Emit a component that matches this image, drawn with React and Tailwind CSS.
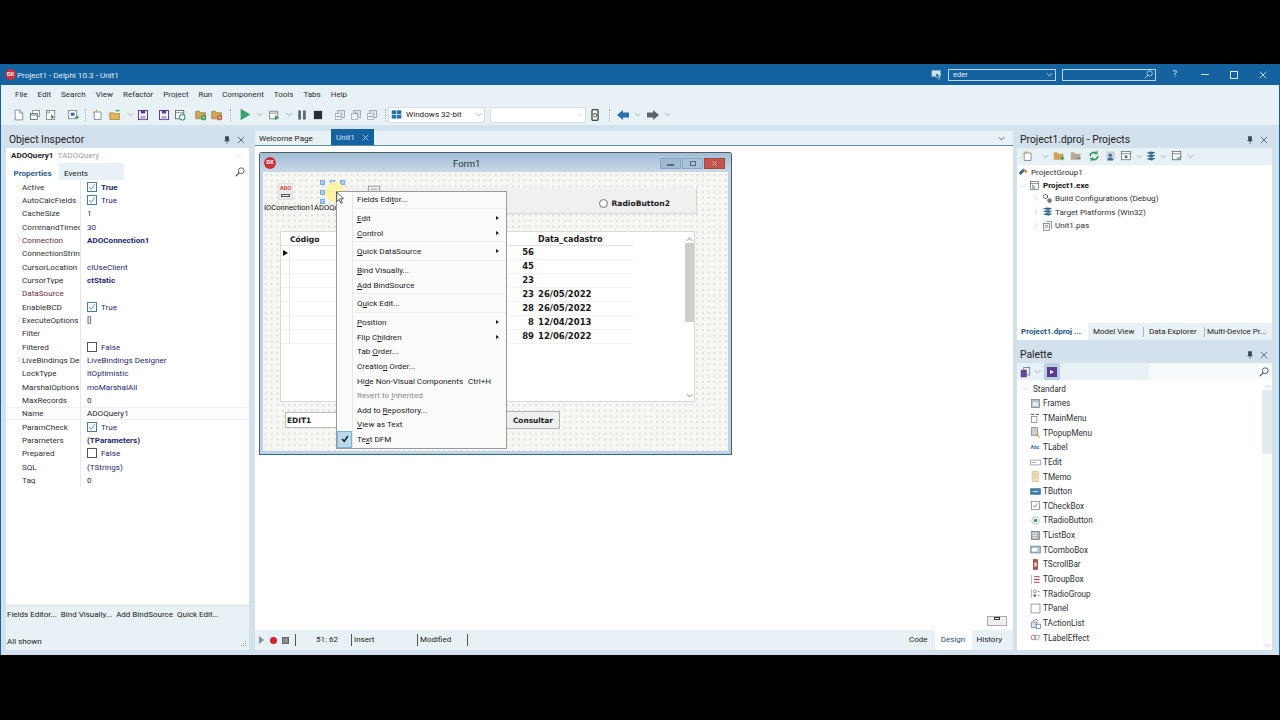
import React from "react";

const Svg = ({ children, s = 12, c = "" }) => (
  <svg viewBox="0 0 16 16" width={s} height={s} className={"block shrink-0 " + c} fill="none">{children}</svg>
);
const Chev = ({ c = "", color = "#8a969e" }) => (
  <svg viewBox="0 0 10 6" width="7" height="5" className={"block shrink-0 " + c} fill="none"><path d="M1 1l4 4 4-4" stroke={color} strokeWidth="1" /></svg>
);
const ChevR = ({ c = "", color = "#b4bcc2" }) => (
  <svg viewBox="0 0 6 10" width="4" height="7" className={"block shrink-0 " + c} fill="none"><path d="M1 1l4 4-4 4" stroke={color} strokeWidth="1" /></svg>
);
const Close = ({ color = "#44505a", s = 8 }) => (
  <svg viewBox="0 0 10 10" width={s} height={s} className="block shrink-0" fill="none"><path d="M1 1l8 8M9 1l-8 8" stroke={color} strokeWidth="1" /></svg>
);
const Pin = () => (
  <svg viewBox="0 0 8 10" width="6" height="8" className="block shrink-0"><path d="M1.5 0h5v5.5h1v1H4.5V10h-1V6.5H.5v-1h1z" fill="#3b4650" /></svg>
);
const Mag = ({ color = "#3b4650", s = 10 }) => (
  <svg viewBox="0 0 12 12" width={s} height={s} className="block shrink-0" fill="none"><circle cx="7.5" cy="4.5" r="3.5" stroke={color} /><path d="M5 7l-4 4" stroke={color} strokeWidth="1.3" /></svg>
);

/* toolbar icons */
const Doc = () => <Svg><path d="M3 1.5h6l4 4v9H3z" fill="#fff" stroke="#6d7a84" /><path d="M9 1.5v4h4" stroke="#6d7a84" /></Svg>;
const Win2 = () => <Svg><rect x="5" y="2" width="9" height="8" fill="#fff" stroke="#6d7a84" /><rect x="2" y="6" width="9" height="8" fill="#fff" stroke="#4c5963" /><path d="M2 8h9" stroke="#4c5963" /></Svg>;
const DocGear = () => <Svg><rect x="2" y="2" width="11" height="12" fill="#fff" stroke="#6d7a84" /><path d="M2 5h4V2" stroke="#6d7a84" /><path d="M8 7l4 4-2 1-1 2z" fill="#3b4650" /></Svg>;
const FormGo = () => <Svg><rect x="2" y="2" width="11" height="11" fill="#fff" stroke="#6d7a84" /><rect x="5" y="5" width="5" height="4" fill="#4b5a9a" /><path d="M10 11h5M13 9l2 2-2 2" stroke="#2e9a4e" strokeWidth="1.4" /></Svg>;
const NewStar = () => <Svg><path d="M3 4h9v10H3z" fill="#fff" stroke="#6d7a84" /><path d="M3 2l2 2M6 1v3M1 5h3" stroke="#d39a2a" strokeWidth="1.2" /></Svg>;
const FolderOpen = () => <Svg><path d="M1 5h5l1 1h7v8H1z" fill="#e0b25a" stroke="#a8853e" /><path d="M9 3a3 3 0 0 1 5 0" stroke="#2e9a4e" strokeWidth="1.6" /></Svg>;
const Save = () => <Svg><rect x="2" y="2" width="12" height="12" fill="#fff" stroke="#5d3f8f" strokeWidth="1.4" /><rect x="5" y="2" width="6" height="4" fill="#5d3f8f" /><rect x="4.5" y="9" width="7" height="5" fill="#b9a9d6" /></Svg>;
const SaveAll = () => <Svg><rect x="2" y="2" width="11" height="11" fill="#fff" stroke="#5c6a75" strokeWidth="1.2" /><path d="M2 5h11" stroke="#5c6a75" /><circle cx="11" cy="11" r="3.6" fill="#fff" stroke="#2e9a7e" strokeWidth="1.4" /></Svg>;
const FolderBadge = ({ color }) => <Svg><path d="M1 3h5l1 2h7v8H1z" fill="#cfa55a" stroke="#9c8040" /><circle cx="11.5" cy="11.5" r="3.5" fill={color} /><path d="M10 11.5h3M11.5 10v3" stroke="#fff" /></Svg>;
const Run = () => <Svg s={13}><path d="M2 1l12 7-12 7z" fill="#38a169" /></Svg>;
const RunWin = () => <Svg><path d="M2 3h11v10H2z" fill="#fff" stroke="#5c6a75" /><path d="M2 5.5h11" stroke="#5c6a75" /><path d="M9 8l6 3.5-6 3.5z" fill="#38a169" /></Svg>;
const Pause = () => <Svg><rect x="3" y="2" width="3.6" height="12" fill="#5b6670" /><rect x="9.4" y="2" width="3.6" height="12" fill="#5b6670" /></Svg>;
const Stop = () => <Svg><rect x="2.5" y="2.5" width="11" height="11" fill="#2a2e32" /></Svg>;
const Trace = ({ flip }) => <Svg><rect x="5" y="2" width="9" height="9" fill="#dbe4ea" stroke="#8c99a3" /><rect x="2" y="6" width="8" height="8" fill="#eef3f6" stroke="#9aa6af" />{flip ? <path d="M7 4l4 4" stroke="#3f8fb5" /> : <path d="M3 10h6" stroke="#3f8fb5" />}</Svg>;
const Grip = ({ c = "" }) => <div className={"w-px h-[12px] border-l border-dotted border-[#aab6be] shrink-0 " + c} />;

const Cell = ({ c = "", children }) => <div className={"w-4 h-4 flex items-center justify-center shrink-0 " + c}>{children}</div>;
const ChevCell = ({ c = "" }) => <div className={"w-[10px] h-4 flex items-center justify-center shrink-0 " + c}><Chev /></div>;

const WinLogo = () => <Svg s={11}><rect x="1" y="2" width="6.5" height="5.5" fill="#1f6fb5" /><rect x="8.5" y="2" width="6.5" height="5.5" fill="#1f6fb5" /><rect x="1" y="8.5" width="6.5" height="5.5" fill="#1f6fb5" /><rect x="8.5" y="8.5" width="6.5" height="5.5" fill="#1f6fb5" /></Svg>;

const Dx = ({ s = 11 }) => (
  <div className={"rounded-full bg-[#c8323c] text-white flex items-center justify-center font-bold leading-none shrink-0 text-[5.5px] " + (s === 11 ? "w-[11px] h-[11px]" : "w-[12px] h-[12px]")}>DX</div>
);

const menus = ["File", "Edit", "Search", "View", "Refactor", "Project", "Run", "Component", "Tools", "Tabs", "Help"];

/* inspector */
const Check = ({ on }) => (
  <div className={"w-[10px] h-[10px] border bg-white shrink-0 flex items-center justify-center " + (on ? "border-[#4a7a9e]" : "border-[#555]")}>
    {on && <svg viewBox="0 0 10 10" width="8" height="8" fill="none"><path d="M1.5 5l2.5 3L8.5 1.5" stroke="#3b7fae" strokeWidth="1" /></svg>}
  </div>
);
const rows = [
  { n: "Active", chk: true, v: "True", b: true },
  { n: "AutoCalcFields", chk: true, v: "True" },
  { n: "CacheSize", v: "1" },
  { n: "CommandTimeout", v: "30" },
  { n: "Connection", v: "ADOConnection1", b: true, arrow: true, red: true },
  { n: "ConnectionString", v: "" },
  { n: "CursorLocation", v: "clUseClient" },
  { n: "CursorType", v: "ctStatic", b: true },
  { n: "DataSource", v: "", red: true },
  { n: "EnableBCD", chk: true, v: "True" },
  { n: "ExecuteOptions", v: "[]", arrow: true },
  { n: "Filter", v: "" },
  { n: "Filtered", chk: false, v: "False" },
  { n: "LiveBindings Designer", v: "LiveBindings Designer", arrow: true },
  { n: "LockType", v: "ltOptimistic" },
  { n: "MarshalOptions", v: "moMarshalAll" },
  { n: "MaxRecords", v: "0" },
  { n: "Name", v: "ADOQuery1", sel: true },
  { n: "ParamCheck", chk: true, v: "True" },
  { n: "Parameters", v: "(TParameters)", b: true },
  { n: "Prepared", chk: false, v: "False" },
  { n: "SQL", v: "(TStrings)" },
  { n: "Tag", v: "0" },
];

const Row = ({ r }) => (
  <div className={"flex h-[13.33px] items-center " + (r.sel ? "bg-[#fcfdfd] shadow-[inset_0_1px_0_#eef0f2,inset_0_-1px_0_#eef0f2]" : "")}>
    <div className="w-[16px] pl-[11px] shrink-0">{r.arrow && <ChevR />}</div>
    <div className={"w-[58px] overflow-hidden whitespace-nowrap shrink-0 " + (r.red ? "text-[#6b2b3c]" : "text-[#2b2f33]")}>{r.n}</div>
    <div className="w-px h-full bg-[#e4e8ea] shrink-0" />
    <div className={"pl-[6px] flex items-center gap-[4px] whitespace-nowrap " + (r.sel ? "text-[#222] " : "text-[#23296b] ") + (r.b ? "font-bold" : "")}>
      {r.chk !== undefined && <Check on={r.chk} />}
      <span>{r.v}</span>
    </div>
  </div>
);

/* context menu */
const Arrow = () => <div className="w-0 h-0 border-y-[2.5px] border-y-transparent border-l-[3px] border-l-[#222] mr-[7px]" />;
const Item = ({ children, sub, gray, checked, shortcut }) => (
  <div className={"flex items-center h-[14.67px] " + (gray ? "text-[#8a8a8a]" : "text-[#222]")}>
    <div className="w-[15px] h-full shrink-0 flex items-center justify-center relative">
      {checked && (
        <div className="absolute inset-x-[0px] inset-y-[-1px] bg-[#b7d9ea] border border-[#7fb3cf] flex items-center justify-center">
          <svg viewBox="0 0 10 10" width="8" height="8" fill="none"><path d="M1.5 5l2.5 3L8.5 1.5" stroke="#111" strokeWidth="1.8" /></svg>
        </div>
      )}
    </div>
    <div className="w-px h-full bg-[#e6e6e6] shrink-0" />
    <div className="pl-[4px] flex-1 whitespace-nowrap">{children}</div>
    {shortcut && <div className="pr-[15px] whitespace-nowrap">{shortcut}</div>}
    {sub && <Arrow />}
  </div>
);
const Sep = () => (
  <div className="flex h-[4px] items-center">
    <div className="w-[15px] h-full shrink-0" />
    <div className="w-px h-full bg-[#e6e6e6] shrink-0" />
    <div className="flex-1 h-px bg-[#ececec]" />
  </div>
);

const gridRows = [["56", ""], ["45", ""], ["23", ""], ["23", "26/05/2022"], ["28", "26/05/2022"], ["8", "12/04/2013"], ["89", "12/06/2022"]];

/* palette icons */
const pal = {
  TFrames: <Svg s={11}><rect x="2" y="2" width="12" height="12" fill="#b9c2c9" stroke="#6d7a84" /><rect x="4" y="6" width="8" height="6" fill="#e6ebee" /></Svg>,
  TMainMenu: <Svg s={11}><rect x="2" y="5" width="8" height="9" fill="#fff" stroke="#6d7a84" /><path d="M1 2h14" stroke="#6d7a84" strokeWidth="2" strokeDasharray="5 2" /></Svg>,
  TPopupMenu: <Svg s={11}><rect x="2" y="1" width="9" height="11" fill="#c9d0d6" stroke="#6d7a84" /><path d="M9 10l5 5" stroke="#d39a2a" strokeWidth="1.6" /></Svg>,
  TLabel: <span className="text-[5px] text-[#3c6d98] font-bold leading-none">Abc</span>,
  TEdit: <Svg s={11}><rect x="1" y="4.5" width="14" height="7" fill="#fff" stroke="#7a868f" /><path d="M3 8h5" stroke="#7a868f" /></Svg>,
  TMemo: <Svg s={11}><rect x="3" y="1" width="9" height="14" fill="#f3e4c2" stroke="#c7b07a" /><path d="M5 4h5M5 7h5M5 10h5" stroke="#c7b07a" /></Svg>,
  TButton: <Svg s={11}><rect x="1" y="4" width="14" height="8" fill="#3f7fb0" stroke="#2b5f88" /><path d="M4 8h8" stroke="#fff" /></Svg>,
  TCheckBox: <Svg s={11}><rect x="2" y="2" width="12" height="12" fill="#fff" stroke="#6d7a84" /><path d="M5 8l2 2.5L11 5" stroke="#3c6d98" /></Svg>,
  TRadioButton: <Svg s={11}><circle cx="8" cy="8" r="5.5" fill="#fff" stroke="#9aa6af" /><circle cx="8" cy="8" r="2.6" fill="#3c8f7a" /></Svg>,
  TListBox: <Svg s={11}><rect x="2" y="2" width="12" height="12" fill="#aeb8c0" stroke="#6d7a84" /><path d="M4 5h6M4 8h6M4 11h6" stroke="#fff" /></Svg>,
  TComboBox: <Svg s={11}><rect x="1" y="3" width="14" height="10" fill="#a9c0d2" stroke="#6d7a84" /><rect x="3" y="6" width="8" height="5" fill="#fff" /></Svg>,
  TScrollBar: <Svg s={11}><rect x="5" y="1" width="6" height="14" fill="#b5544f" stroke="#7d3b38" /><rect x="6" y="5" width="4" height="6" fill="#e7c9c7" /></Svg>,
  TGroupBox: <Svg s={11}><path d="M3 2H2v12h1" stroke="#8a969e" /><path d="M6 4h8M6 8h8M6 12h8" stroke="#a33d4e" strokeWidth="1.5" /></Svg>,
  TRadioGroup: <Svg s={11}><path d="M3 2H2v12h1" stroke="#8a969e" /><circle cx="7" cy="5" r="2" stroke="#666" /><circle cx="7" cy="11" r="2" fill="#666" /><path d="M11 5h3M11 11h3" stroke="#666" /></Svg>,
  TPanel: <Svg s={11}><rect x="1.5" y="1.5" width="13" height="13" fill="#fff" stroke="#6d7a84" /></Svg>,
  TActionList: <Svg s={11}><path d="M2 6h8v8H2z" fill="#dfe5ea" stroke="#5c6a75" /><path d="M4 4l6-2 2 3" stroke="#5c6a75" /><rect x="9" y="9" width="6" height="6" fill="#fff" stroke="#3c6d98" /></Svg>,
  TLabelEffect: <Svg s={11}><circle cx="5" cy="8" r="3.5" stroke="#a33d4e" /><circle cx="10" cy="8" r="3.5" stroke="#7a868f" /><path d="M13 4l2 2" stroke="#2e9a4e" /></Svg>,
};
const palItems = [
  ["Frames", "TFrames"], ["TMainMenu", "TMainMenu"], ["TPopupMenu", "TPopupMenu"], ["TLabel", "TLabel"], ["TEdit", "TEdit"],
  ["TMemo", "TMemo"], ["TButton", "TButton"], ["TCheckBox", "TCheckBox"], ["TRadioButton", "TRadioButton"], ["TListBox", "TListBox"],
  ["TComboBox", "TComboBox"], ["TScrollBar", "TScrollBar"], ["TGroupBox", "TGroupBox"], ["TRadioGroup", "TRadioGroup"], ["TPanel", "TPanel"],
  ["TActionList", "TActionList"], ["TLabelEffect", "TLabelEffect"],
];

const PanelHead = ({ title }) => (
  <div className="h-[17px] flex items-center justify-between pl-[3px] pr-[4px] pt-px shrink-0">
    <span className="text-[10.3px] text-[#222] leading-none">{title}</span>
    <div className="flex items-center gap-[7px]"><Pin /><Close /></div>
  </div>
);

export default function App() {
  return (
    <div className="w-[1280px] h-[720px] bg-black pt-[64px] overflow-hidden font-['Roboto',sans-serif] text-[8.1px] text-[#222] leading-none">
      <div className="h-[591px] flex flex-col bg-[#d2e1eb] border-x border-[#14629f]">
        {/* title bar */}
        <div className="h-[21px] bg-[#14629f] flex items-center pl-[4px] shrink-0">
          <Dx />
          <span className="ml-px pt-px text-[#e3eef6]">Project1 - Delphi 10.3 - Unit1</span>
          <div className="ml-auto flex items-center">
            <Svg s={11}><rect x="1" y="2" width="13" height="9" fill="#cfe0ec" /><path d="M7 6l6 3-2 1 2 4-2 1-2-4-2 1z" fill="#14629f" stroke="#fff" strokeWidth=".7" /></Svg>
            <div className="ml-[6px] w-[108px] h-[12px] border border-[#bcd6ea] flex items-center justify-between pl-[4px] pr-[2px] text-[#e3eef6] text-[7.6px]">
              <span>eder</span><Chev color="#ffffff" />
            </div>
            <div className="ml-[6px] w-[94px] h-[12px] border border-[#bcd6ea] flex items-center justify-end pr-[2px]"><Mag color="#d8e8f3" s={9} /></div>
            <span className="w-[14px] ml-[12px] text-center text-[#dbe9f3] text-[9px]">?</span>
            <div className="ml-[19px] w-[8px] h-px bg-[#cfe2ef]" />
            <div className="ml-[21px] w-[8px] h-[8px] border border-[#dbe9f3]" />
            <div className="ml-[21px] mr-[12px]"><Close color="#eef5fa" /></div>
          </div>
        </div>
        {/* menu */}
        <div className="h-[19px] bg-[#e8f1f5] flex items-center pl-[14px] gap-[10px] shrink-0 text-[#2a2f33]">
          {menus.map((m) => <span key={m} className="text-[8px]">{m}</span>)}
        </div>
        {/* toolbar */}
        <div className="h-[21px] bg-[#e8f1f5] flex items-center pl-[10px] shrink-0">
          <Cell><Doc /></Cell><Cell><Win2 /></Cell><Cell><DocGear /></Cell>
          <Cell c="ml-[6px]"><FormGo /></Cell>
          <Grip c="ml-[4px]" />
          <Cell c="ml-[4px]"><NewStar /></Cell>
          <Cell c="ml-px"><FolderOpen /></Cell>
          <ChevCell c="ml-[2px]" />
          <Cell><Save /></Cell>
          <Cell c="ml-[5px]"><Save /></Cell>
          <Cell><SaveAll /></Cell>
          <Cell c="ml-[5px]"><FolderBadge color="#3c9a57" /></Cell>
          <Cell><FolderBadge color="#c9574a" /></Cell>
          <Grip c="ml-[5px]" />
          <Cell c="ml-[6px]"><Run /></Cell>
          <ChevCell c="ml-px" />
          <Cell c="ml-[2px]"><RunWin /></Cell>
          <ChevCell c="ml-[2px]" />
          <Cell><Pause /></Cell>
          <Cell><Stop /></Cell>
          <Cell c="ml-[6px]"><Trace /></Cell>
          <Cell><Trace flip /></Cell>
          <Cell><Trace /></Cell>
          <Grip c="ml-[5px]" />
          <div className="ml-[2px] w-[97px] h-[16px] bg-white border border-[#d5dfe5] flex items-center pl-[2px] pr-[2px] gap-[4px]">
            <WinLogo /><span className="flex-1">Windows 32-bit</span><Chev />
          </div>
          <div className="ml-[5px] w-[96px] h-[16px] bg-white border border-[#d5dfe5] flex items-center justify-end pr-[2px]"><Chev color="#c2cad0" /></div>
          <Svg s={12} c="ml-[3px]"><rect x="4" y="1" width="8" height="14" rx="1" fill="#fff" stroke="#111" strokeWidth="1.4" /><path d="M6 8a2 2 0 0 1 4 0M10 8a2 2 0 0 1-4 1" stroke="#111" /></Svg>
          <Grip c="ml-[8px]" />
          <svg viewBox="0 0 12 10" width="12" height="10" className="ml-[7px] block"><path d="M0 5l6-5v2.5h6v5H6V10z" fill="#2a72ad" /></svg>
          <Chev c="ml-[5px]" />
          <svg viewBox="0 0 12 10" width="12" height="10" className="ml-[6px] block"><path d="M12 5L6 0v2.5H0v5h6V10z" fill="#5e6468" /></svg>
          <Chev c="ml-[5px]" />
        </div>

        {/* main */}
        <div className="flex-1 flex min-h-0 pt-[6px]">
          {/* Left panel */}
          <div className="w-[254px] pl-[5px] pr-[6px] flex flex-col shrink-0">
            <PanelHead title="Object Inspector" />
            <div className="h-[15px] bg-white flex items-center pl-[5px] pr-[7px] shrink-0">
              <span className="font-bold">ADOQuery1</span>
              <span className="ml-[4px] text-[#9aa3a9]">TADOQuery</span>
              <Chev c="ml-auto" color="#c8d0d5" />
            </div>
            <div className="h-[17px] flex items-center shrink-0 bg-white">
              <div className="w-[53px] h-full bg-white flex items-center justify-center pt-[3px] font-bold text-[#2a5f8f]">Properties</div>
              <div className="w-[65px] h-full bg-[#e8f1f5] flex items-center pl-[5px] pt-[3px]">Events</div>
              <div className="flex-1 flex justify-end pr-[4px] pt-[1px]"><Mag /></div>
            </div>
            <div className="h-[425px] bg-white shrink-0 overflow-hidden">
              {rows.map((r) => <Row key={r.n} r={r} />)}
            </div>
            <div className="flex-1 bg-[#e8f1f5] mt-px flex flex-col relative">
              <div className="h-[17px] flex items-center pl-px gap-[4px] shrink-0 whitespace-nowrap text-[8px]">
                <span>Fields Editor...</span><span>Bind Visually...</span><span>Add BindSource</span><span>Quick Edit...</span>
              </div>
              <div className="mt-auto mb-[4px] pl-[1px] text-[8px]">All shown</div>
              <svg viewBox="0 0 6 6" width="6" height="6" className="absolute right-[3px] bottom-[3px] block"><path d="M5 0h1v1H5zM3 2h1v1H3zM5 2h1v1H5zM1 4h1v1H1zM3 4h1v1H3zM5 4h1v1H5z" fill="#9aa6af" /></svg>
            </div>
            <div className="h-[5px] shrink-0" />
          </div>

          {/* Center */}
          <div className="w-[758px] flex flex-col shrink-0">
            <div className="h-[15px] bg-[#e8f1f5] border-b border-[#5f8f9f] flex items-end shrink-0 relative">
              <div className="w-[72px] h-full flex items-center pl-[4px] pt-px">Welcome Page</div>
              <div className="ml-[4px] w-[43px] h-[16px] bg-[#14629f] flex items-center pl-[5px] gap-[7px] text-[#d6e6f2]">Unit1<Close color="#d6e6f2" s={7} /></div>
              <Chev c="ml-auto mr-[8px] self-center" color="#333" />
            </div>
            <div className="flex-1 bg-white relative min-h-0 pt-[6px] pl-[4px]">
              {/* Form */}
              <div className="w-[473px] h-[303px] relative bg-[#bcd3e6] border border-[#4d5d69] border-b-[#2f6c80] rounded-t-[3px] flex flex-col">
                <div className="h-[19px] bg-gradient-to-b from-[#a3bdd4] to-[#c7d9e8] flex items-center pl-[4px] pt-px relative shrink-0">
                  <Dx s={12} />
                  <span className="absolute left-[193px] top-[6px] text-[9.5px] text-[#28343e]">Form1</span>
                  <div className="ml-auto mr-[6px] flex gap-[1px] items-center">
                    <div className="w-[21px] h-[11px] bg-[#9fbad2] border border-[#8aa4bb] flex items-end justify-center pb-[2px]"><div className="w-[7px] h-[2px] bg-white border border-[#55697a]" /></div>
                    <div className="w-[21px] h-[11px] bg-[#a9c3d9] border border-[#8aa4bb] flex items-center justify-center"><div className="w-[6px] h-[5px] border border-[#55697a]" /></div>
                    <div className="w-[21px] h-[11px] bg-[#c2554e] border border-[#a04a44] flex items-center justify-center"><Close color="#fff" s={5} /></div>
                  </div>
                </div>
                <div className="flex-1 mx-[3px] mb-[3px] bg-[#f6f6f3] bg-[radial-gradient(circle,#a0a0a0_0.5px,transparent_0.75px)] bg-[length:5.76px_5.76px]" />

                {/* non-visual components */}
                <div className="absolute left-[18px] top-[30px] w-[15px] h-[17px] bg-[#ececec] border border-[#dedede] flex flex-col items-center pt-[2px]">
                  <span className="text-[5.5px] font-bold text-[#c44] leading-none">ADO</span>
                  <div className="mt-[2px] w-[9px] h-[3px] border border-[#555]" />
                </div>
                <div className="absolute left-[4px] w-[72px] top-[51px] overflow-hidden whitespace-nowrap text-[7.6px] text-[#111]">IOConnection1ADOQuery1</div>

                {/* panel */}
                <div className="absolute left-[85px] top-[35px] w-[352px] h-[26px] bg-[#f0f0f0] border-b border-r border-[#d5d5d5] font-['DejaVu_Sans',sans-serif] font-bold text-[7.6px] flex items-center justify-end pr-[26px] pt-[6px] gap-[3px]">
                  <div className="w-[9px] h-[9px] rounded-full bg-white border border-[#777]" />
                  <span>RadioButton2</span>
                </div>
                <div className="absolute left-[107px] top-[31px]">
                  <Svg s={14}><rect x="1.5" y="2.5" width="13" height="11" fill="#f1f1f1" stroke="#8a8f93" /><path d="M4 6h8M4 8.5h8M4 11h8" stroke="#8a8f93" /></Svg>
                </div>
                {/* handles */}
                <div className="absolute left-[60px] top-[27px] w-[5px] h-[5px] bg-[#a9cdec] border border-[#7eaed8]" />
                <div className="absolute left-[70px] top-[27px] w-[5px] h-[5px] bg-[#cfe2f3] border border-[#7eaed8]" />
                <div className="absolute left-[80px] top-[27px] w-[5px] h-[5px] bg-[#a9cdec] border border-[#7eaed8]" />
                <div className="absolute left-[60px] top-[37px] w-[5px] h-[5px] bg-[#a9cdec] border border-[#7eaed8]" />
                <div className="absolute left-[60px] top-[46px] w-[5px] h-[5px] bg-[#a9cdec] border border-[#7eaed8]" />

                {/* grid */}
                <div className="absolute left-[20px] top-[78px] w-[415px] h-[171px] bg-white border border-[#d8d8d8] flex font-['DejaVu_Sans',sans-serif] font-bold text-[8.5px] text-[#1a1a1a]">
                  <div className="w-[403px] flex flex-col shrink-0">
                    <div className="h-[14px] flex items-center border-b border-[#e2e2e2] shrink-0 w-[352px] pt-[2px]">
                      <div className="w-[9px] h-full shrink-0" />
                      <span className="text-[7.6px]">Código</span>
                      <span className="absolute left-[257px] text-[8px]">Data_cadastro</span>
                    </div>
                    {gridRows.map((g, i) => (
                      <div key={i} className="h-[14px] flex items-center shrink-0 w-[352px] border-b border-[#f3f3f3]">
                        <div className="w-[9px] h-full border-r border-[#e8e8e8] shrink-0 flex items-center justify-center">
                          {i === 0 && <div className="w-0 h-0 border-y-[3.5px] border-y-transparent border-l-[5px] border-l-[#111]" />}
                        </div>
                        <div className="w-[244px] text-right">{g[0]}</div>
                        <div className="ml-[4px] whitespace-nowrap">{g[1]}</div>
                      </div>
                    ))}
                  </div>
                  <div className="flex-1 flex flex-col items-center pt-[5px] pb-[3px]">
                    <Chev color="#555" c="rotate-180" />
                    <div className="w-[9px] h-[79px] bg-[#cdcdcd] mt-[1px]" />
                    <Chev color="#555" c="mt-auto" />
                  </div>
                </div>

                {/* edit & button */}
                <div className="absolute left-[25px] top-[259px] w-[60px] h-[16px] bg-white border border-[#bbb] flex items-center pl-[1px] pt-px font-['DejaVu_Sans',sans-serif] font-bold text-[7.4px]">EDIT1</div>
                <div className="absolute left-[240px] top-[258px] w-[60px] h-[18px] bg-[#f0f0f0] border border-[#b5b5b5] flex items-center justify-end pr-[6px] pt-px font-['DejaVu_Sans',sans-serif] font-bold text-[7.4px]">Consultar</div>

                {/* cursor highlight */}
                <div className="absolute left-[65px] top-[29px] w-[20px] h-[20px] rounded-full bg-[#fbf3a0] opacity-90" />

                {/* context menu */}
                <div className="absolute left-[76px] top-[38px] w-[171px] h-[258px] bg-[#fbfbfb] border border-[#9a9a9a] text-[8.1px]">
                  <Item>Fields Edi<u>t</u>or...</Item>
                  <Sep />
                  <Item sub><u>E</u>dit</Item>
                  <Item sub><u>C</u>ontrol</Item>
                  <Sep />
                  <Item sub><u>Q</u>uick DataSource</Item>
                  <Sep />
                  <Item><u>B</u>ind Visually...</Item>
                  <Item><u>A</u>dd BindSource</Item>
                  <Sep />
                  <Item>Q<u>u</u>ick Edit...</Item>
                  <Sep />
                  <Item sub><u>P</u>osition</Item>
                  <Item sub>Flip C<u>h</u>ildren</Item>
                  <Item>Tab <u>O</u>rder...</Item>
                  <Item>Creatio<u>n</u> Order...</Item>
                  <Item shortcut="Ctrl+H">Hi<u>d</u>e Non-Visual Components</Item>
                  <Item gray>Revert to <u>I</u>nherited</Item>
                  <Item>Add to <u>R</u>epository...</Item>
                  <Item><u>V</u>iew as Text</Item>
                  <Item checked>Te<u>x</u>t DFM</Item>
                </div>

                {/* cursor */}
                <svg viewBox="0 0 12 18" width="9" height="14" className="absolute left-[76px] top-[38px] block"><path d="M1 1v13l3-3 2.5 5 2-1-2.5-5H10z" fill="#fff" stroke="#222" strokeWidth="1" /></svg>
              </div>
              {/* hidden components button */}
              <div className="absolute right-[6px] bottom-[4px] w-[20px] h-[10px] bg-[#efefef] border border-[#aaa] flex items-start justify-center">
                <div className="w-[6px] h-[3px] border border-[#333]" />
              </div>
            </div>
            {/* status bar */}
            <div className="h-[20px] bg-[#e8f1f5] flex items-center shrink-0 relative text-[8px]">
              <div className="ml-[4px] w-0 h-0 border-y-[4px] border-y-transparent border-l-[5px] border-l-[#8b9299]" />
              <div className="ml-[6px] w-[7px] h-[7px] rounded-full bg-[#d9202c]" />
              <div className="ml-[5px] w-[7px] h-[7px] bg-[#8f8f8f] border border-[#666]" />
              <div className="ml-[6px] w-px h-[12px] bg-[#555]" />
              <span className="ml-[20px] w-[22px]">51: 62</span>
              <div className="ml-[13px] w-px h-[12px] bg-[#555]" />
              <span className="ml-[2px] w-[63px]">Insert</span>
              <div className="w-px h-[12px] bg-[#555]" />
              <span className="ml-[2px] w-[47px]">Modified</span>
              <div className="w-px h-[12px] bg-[#555]" />
              <div className="ml-auto mr-[11px] flex items-center h-full">
                <span className="mr-[7px]">Code</span>
                <div className="w-[37px] h-full bg-white flex items-center justify-center text-[#24557f]">Design</div>
                <span className="ml-[5px]">History</span>
              </div>
            </div>
            <div className="h-[5px] shrink-0" />
          </div>

          {/* Right */}
          <div className="flex-1 pl-[4px] pr-[7px] flex flex-col min-w-0">
            <PanelHead title="Project1.dproj - Projects" />
            <div className="h-[17px] bg-[#e8f1f5] flex items-center pl-[5px] pb-px shrink-0">
              <NewStar /><Chev c="ml-[8px]" />
              <Svg s={12} c="ml-[4px]"><path d="M1 3h5l1 2h7v8H1z" fill="#cfa55a" /><path d="M10 11h5M12.5 8.5v5" stroke="#2e9a4e" strokeWidth="1.4" /></Svg>
              <Svg s={12} c="ml-[5px]"><path d="M1 3h5l1 2h7v8H1z" fill="#b8ad92" /><path d="M8 11h6" stroke="#777" strokeWidth="1.4" /></Svg>
              <Svg s={12} c="ml-[6px]"><path d="M3 8a5 5 0 0 1 9-3M13 8a5 5 0 0 1-9 3" stroke="#2e9a57" strokeWidth="2" /><path d="M12 1v4H8M4 15v-4h4" stroke="#2e9a57" strokeWidth="1.4" /></Svg>
              <Svg s={12} c="ml-[5px]"><rect x="2" y="2" width="11" height="11" fill="#c9d0d6" /><circle cx="7" cy="7" r="2.2" fill="#3c6d98" /><path d="M3 14a4 4 0 0 1 8 0z" fill="#3c6d98" /></Svg>
              <Svg s={12} c="ml-[3px]"><rect x="2" y="2" width="12" height="11" fill="#fff" stroke="#5c6a75" /><path d="M2 5h12" stroke="#5c6a75" /><circle cx="8" cy="9" r="2" fill="#5c6a75" /></Svg>
              <Chev c="ml-[4px]" />
              <Svg s={12} c="ml-[2px]"><path d="M2 4l5-2 7 1-5 3zM2 8l5-2 7 1-5 3zM2 12l5-2 7 1-5 3z" fill="#33658f" /></Svg>
              <Chev c="ml-[3px]" />
              <Svg s={12} c="ml-[4px]"><rect x="2" y="2" width="11" height="11" fill="#fff" stroke="#5c6a75" /><path d="M2 5h11" stroke="#5c6a75" /><path d="M8 10l2 2 4-4" stroke="#2e9a57" strokeWidth="1.4" /></Svg>
              <Chev c="ml-[4px]" />
            </div>
            <div className="h-[158px] bg-white shrink-0 text-[#2b2f33]">
              <div className="h-[13.4px] flex items-center pl-[1px] gap-[2px]">
                <Svg s={11}><path d="M1 10L7 4l3 3-6 6z" fill="#33658f" /><path d="M7 3l7 5-3 3z" fill="#c9863a" /></Svg>
                <span>ProjectGroup1</span>
              </div>
              <div className="h-[13.4px] flex items-center pl-[2px]">
                <Chev color="#c2cad0" />
                <Svg s={11} c="ml-[3px]"><rect x="2" y="2" width="12" height="12" fill="#fff" stroke="#5c6a75" /><path d="M2 5h12M5 7l4 4-2 0-1 2z" stroke="#5c6a75" /></Svg>
                <span className="ml-[3px] font-bold text-[#111]">Project1.exe</span>
              </div>
              {[
                ["Build Configurations (Debug)", <Svg s={11} key="a"><circle cx="5" cy="5" r="3" stroke="#555" strokeWidth="1.6" strokeDasharray="2 1" /><circle cx="11" cy="11" r="3.4" fill="#777" /></Svg>],
                ["Target Platforms (Win32)", <Svg s={11} key="b"><path d="M1 4l5-2 9 1-5 3zM1 8l5-2 9 1-5 3zM1 12l5-2 9 1-5 3z" fill="#33658f" /></Svg>],
                ["Unit1.pas", <Svg s={11} key="c"><rect x="2" y="5" width="9" height="10" fill="#fff" stroke="#5c6a75" /><path d="M4 8h5M4 10.5h5M6 2h8v11" stroke="#5c6a75" /></Svg>],
              ].map(([t, ic]) => (
                <div key={t} className="h-[13.4px] flex items-center pl-[17px]">
                  <ChevR />
                  <div className="ml-[4px]">{ic}</div>
                  <span className="ml-[2px]">{t}</span>
                </div>
              ))}
            </div>
            <div className="h-[17px] bg-[#e8f1f5] flex items-center shrink-0 text-[8px] whitespace-nowrap">
              <div className="w-[71px] h-full bg-white flex items-center pl-[4px] text-[#24557f] font-bold overflow-hidden">Project1.dproj ...</div>
              <span className="ml-[5px] w-[50px]">Model View</span>
              <div className="w-px h-[10px] bg-[#aab6be]" />
              <span className="ml-[5px] w-[55px]">Data Explorer</span>
              <div className="w-px h-[10px] bg-[#aab6be]" />
              <span className="ml-[2px]">Multi-Device Pr...</span>
            </div>
            <div className="h-[6px] shrink-0" />
            <PanelHead title="Palette" />
            <div className="h-[17px] bg-[#e8f1f5] flex items-center pl-[3px] shrink-0">
              <Svg s={12}><rect x="1" y="5" width="8" height="10" fill="#6a3f9a" /><rect x="5" y="2" width="8" height="10" fill="none" stroke="#5c6a75" /></Svg>
              <Chev c="ml-[2px]" />
              <div className="ml-[3px] w-[16px] h-full bg-[#b7cfe0] flex items-center justify-center">
                <div className="w-[10px] h-[10px] bg-[#5b3a92] flex items-center justify-center">
                  <div className="w-0 h-0 border-y-[2.5px] border-y-transparent border-l-[4px] border-l-white" />
                </div>
              </div>
              <div className="ml-auto w-[123px] h-full bg-[#f7fafb] flex items-center justify-end pr-[3px]"><Mag /></div>
            </div>
            <div className="flex-1 bg-white flex min-h-0">
              <div className="flex-1 pt-[1.5px] text-[#2b2f33] text-[8.2px] min-w-0">
                <div className="h-[14.65px] flex items-center pl-[5px]"><Chev color="#c2cad0" /><span className="ml-[4px]">Standard</span></div>
                {palItems.map(([t, k]) => (
                  <div key={t} className="h-[14.65px] flex items-center pl-[11px]">
                    <div className="w-[14px] flex items-center justify-center shrink-0">{pal[k]}</div>
                    <span className="ml-px">{t}</span>
                  </div>
                ))}
              </div>
              <div className="w-[10px] flex flex-col items-center pt-[4px] pb-[2px] bg-[#fbfcfc] shrink-0">
                <Chev color="#b4bcc2" c="rotate-180" />
                <div className="w-full h-[64px] bg-[#e2ebf0] mt-[1px]" />
                <Chev color="#b4bcc2" c="mt-auto" />
              </div>
            </div>
            <div className="h-[5px] shrink-0" />
          </div>
        </div>
      </div>
    </div>
  );
}
